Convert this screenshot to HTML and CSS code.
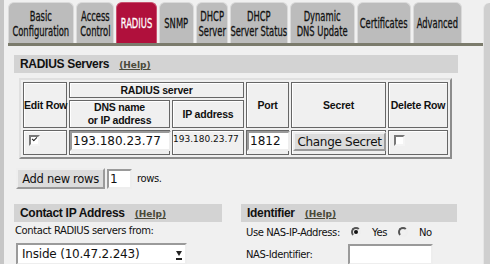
FILE: index.html
```html
<!DOCTYPE html>
<html lang="en">
<head>
    <meta charset="UTF-8">
    <title>RADIUS</title>
    <link rel="stylesheet" href="styles.css">
</head>
<body>
    <div class="frame">
        <div class="edge-left"></div>
        <div class="main">
            <div class="tabs">
                <div class="tab t-basic"><span>Basic<br>Configuration</span></div>
                <div class="tab t-access"><span>Access<br>Control</span></div>
                <div class="tab t-radius active"><span>RADIUS</span></div>
                <div class="tab t-snmp"><span>SNMP</span></div>
                <div class="tab t-dhcp"><span>DHCP<br>Server</span></div>
                <div class="tab t-status"><span>DHCP<br>Server Status</span></div>
                <div class="tab t-ddns"><span>Dynamic<br>DNS Update</span></div>
                <div class="tab t-cert"><span>Certificates</span></div>
                <div class="tab t-adv"><span>Advanced</span></div>
            </div>
            <div class="content">
                <div class="band">
                    <span class="band-title">RADIUS Servers</span>
                    <a class="help" href="#">(Help)</a>
                </div>
                <table class="servers">
                    <colgroup>
                        <col class="c-edit"><col class="c-dns"><col class="c-ip">
                        <col class="c-port"><col class="c-secret"><col class="c-del">
                    </colgroup>
                    <tr class="head1">
                        <th rowspan="2">Edit Row</th>
                        <th colspan="2">RADIUS server</th>
                        <th rowspan="2">Port</th>
                        <th rowspan="2">Secret</th>
                        <th rowspan="2">Delete Row</th>
                    </tr>
                    <tr class="head2">
                        <th>DNS name<br>or IP address</th>
                        <th>IP address</th>
                    </tr>
                    <tr class="data">
                        <td><span class="check on"></span></td>
                        <td><input class="field dns" type="text" value="193.180.23.77"></td>
                        <td class="ip-text">193.180.23.77</td>
                        <td><input class="field port" type="text" value="1812"></td>
                        <td><button class="btn secret-btn">Change Secret</button></td>
                        <td><span class="check"></span></td>
                    </tr>
                </table>
                <div class="add-rows">
                    <button class="btn add-btn">Add new rows</button>
                    <input class="field count" type="text" value="1">
                    <span class="small">rows.</span>
                </div>
                <div class="columns">
                    <div class="col left">
                        <div class="band">
                            <span class="band-title">Contact IP Address</span>
                            <a class="help" href="#">(Help)</a>
                        </div>
                        <div class="small label">Contact RADIUS servers from:</div>
                        <div class="select">
                            <span>Inside (10.47.2.243)</span>
                            <span class="arrow"></span>
                        </div>
                    </div>
                    <div class="col right">
                        <div class="band">
                            <span class="band-title">Identifier</span>
                            <a class="help" href="#">(Help)</a>
                        </div>
                        <div class="opt-row">
                            <span class="small opt-label">Use NAS-IP-Address:</span>
                            <span class="radio on"></span><span class="small radio-text">Yes</span>
                            <span class="radio"></span><span class="small radio-text">No</span>
                        </div>
                        <div class="opt-row nas-row">
                            <span class="small opt-label">NAS-Identifier:</span>
                            <input class="field nas" type="text" value="">
                        </div>
                    </div>
                </div>
            </div>
        </div>
        <div class="edge-right"></div>
    </div>
</body>
</html>
```
FILE: styles.css
```css
body {
    margin: 0;
    background: #f0f0f0;
    font-family: "DejaVu Sans", Verdana, sans-serif;
    font-size: 11px;
    color: #111;
    overflow: hidden;
}
.frame {
    display: flex;
    height: 264px;
}
.edge-left {
    flex: 0 0 4px;
    background: #c6c6c6;
}
.edge-right {
    flex: 0 0 6px;
    margin-top: 3px;
    background: #cfcfcf;
    border-left: 1px solid #e6e6e6;
    border-top-left-radius: 6px;
}
.main {
    flex: 1;
    min-width: 0;
    padding-left: 4px;
}

/* tabs */
.tabs {
    display: flex;
    gap: 2px;
    padding-top: 2px;
    height: 41px;
    border-bottom: 3px solid #7b7b6c;
}
.tab {
    flex: none;
    box-sizing: border-box;
    display: flex;
    align-items: center;
    justify-content: center;
    background: #bcbcbc;
    border: 1px solid #dadada;
    border-bottom: none;
    border-radius: 6px 6px 0 0;
    color: #111;
}
.tab span {
    flex: none;
    white-space: nowrap;
    text-align: center;
    font-size: 13.5px;
    line-height: 15px;
    transform: scaleX(0.62);
    -webkit-text-stroke: 0.3px;
    padding-top: 1px;
}
.tab.active {
    background: #b0103c;
    border-color: #c9506e;
    color: #fff;
}
.t-basic { width: 66px; }
.t-access { width: 38px; }
.t-radius { width: 41px; }
.t-snmp { width: 35px; }
.t-dhcp { width: 32px; }
.t-status { width: 58px; }
.t-ddns { width: 65px; }
.t-cert { width: 54px; }
.t-adv { width: 49px; }

/* content */
.content {
    width: 444px;
    padding: 9px 0 0 6px;
}
.band {
    display: flex;
    align-items: baseline;
    gap: 10px;
    height: 18px;
    line-height: 18px;
    padding-left: 6px;
    background: #d3d3d3;
}
.band-title {
    font-family: "Liberation Sans", Arial, sans-serif;
    font-size: 12px;
    font-weight: bold;
    letter-spacing: -0.3px;
    color: #111;
}
.help {
    font-size: 9px;
    font-weight: bold;
    color: #4a4a3a;
}

/* servers table */
.servers {
    width: 433px;
    table-layout: fixed;
    margin: 5px 0 0 5px;
    border-collapse: separate;
    border-spacing: 2px;
    border: 2px outset #e0e0e0;
}
.servers th,
.servers td {
    border: 1px solid #666;
    box-shadow: inset 1px 1px 0 #fff;
    padding: 0;
    text-align: center;
    white-space: nowrap;
}
.servers th {
    font-family: "Liberation Sans", Arial, sans-serif;
    font-size: 10.5px;
    font-weight: bold;
    letter-spacing: -0.2px;
}
.c-edit { width: 44px; }
.c-dns { width: 101px; }
.c-ip { width: 72px; }
.c-port { width: 43px; }
.c-secret { width: 95px; }
.c-del { width: 60px; }
.head1 th {
    height: 14px;
}
.head2 th {
    height: 26px;
    line-height: 13px;
}
.data td {
    height: 20px;
    text-align: left;
    vertical-align: top;
}
.servers td.ip-text {
    font-size: 9px;
    padding-top: 3px;
}

.field {
    box-sizing: border-box;
    height: 20px;
    border: 2px inset #eee;
    background: #fff;
    font-family: inherit;
    font-size: 12px;
    color: #111;
    padding: 0 1px;
    margin: 0;
}
.field.dns { width: 101px; }
.field.port { width: 43px; }
.field.count { width: 25px; }
.field.nas { width: 85px; height: 21px; }

.btn {
    box-sizing: border-box;
    height: 19px;
    padding: 0 6px;
    background: #dcdcdc;
    border: 2px outset #eee;
    font-family: inherit;
    font-size: 12px;
    letter-spacing: -0.3px;
    color: #111;
    margin: 0;
}
.secret-btn {
    width: 93px;
    padding: 0;
    margin: 1px 0 0 1px;
}
.add-btn {
    width: 89px;
    height: 21px;
    padding: 0;
    font-size: 11.5px;
}

.check {
    display: inline-block;
    box-sizing: border-box;
    width: 11px;
    height: 11px;
    margin: 4px 0 0 5px;
    border: 2px solid;
    border-color: #777 #f4f4f4 #f4f4f4 #777;
    background: #fff;
    position: relative;
}
.check.on::after {
    content: "";
    position: absolute;
    left: 1px;
    top: 0;
    width: 4px;
    height: 2px;
    border-left: 1px solid #222;
    border-bottom: 1px solid #222;
    transform: rotate(-45deg);
}

.add-rows {
    display: flex;
    align-items: center;
    gap: 2px;
    margin: 9px 0 0 2px;
}
.small {
    font-size: 10px;
    letter-spacing: -0.4px;
}
.add-rows .small {
    margin-left: 3px;
}

.columns {
    display: flex;
    gap: 19px;
    margin-top: 15px;
}
.col.left { width: 208px; }
.col.right { width: 216px; }
.label {
    margin: 2px 0 0 1px;
    line-height: 13px;
}
.select {
    display: flex;
    align-items: center;
    justify-content: space-between;
    box-sizing: border-box;
    width: 171px;
    height: 22px;
    margin: 6px 0 0 2px;
    padding: 0 3px 0 4px;
    background: #fff;
    border: 2px inset #eee;
    font-size: 12px;
    letter-spacing: -0.2px;
}
.arrow {
    width: 0;
    height: 0;
    border-left: 3px solid transparent;
    border-right: 3px solid transparent;
    border-top: 5px solid #222;
    border-bottom: 2px solid #fff;
    box-shadow: 0 2px 0 #222;
}

.opt-row {
    display: flex;
    align-items: center;
    margin: 1px 0 0 5px;
    height: 18px;
}
.opt-row.nas-row {
    height: 21px;
    margin-top: 3px;
}
.opt-label {
    width: 105px;
    white-space: nowrap;
}
.radio {
    display: inline-block;
    box-sizing: border-box;
    width: 10px;
    height: 10px;
    border-radius: 50%;
    border: 2px solid;
    border-color: #555 #eee #eee #555;
    position: relative;
}
.radio.on::after {
    content: "";
    position: absolute;
    left: 1px;
    top: 1px;
    width: 4px;
    height: 4px;
    border-radius: 50%;
    background: #111;
}
.radio-text {
    margin: 0 11px 0 11px;
}
.nas-row .field.nas {
    margin-left: -3px;
}
```
